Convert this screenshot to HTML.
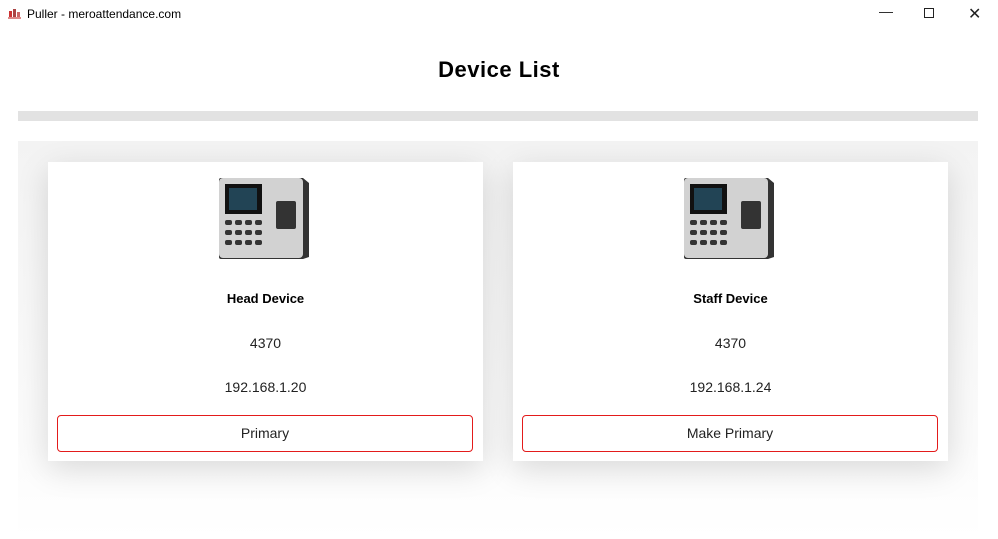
<!DOCTYPE html>
<html><head><meta charset="utf-8"><style>
*{margin:0;padding:0;box-sizing:border-box}
body{width:998px;height:539px;overflow:hidden;background:#fff;font-family:"Liberation Sans",sans-serif;position:relative;color:#111}
.tb{position:absolute;left:0;top:0;width:998px;height:28px}
.tb .t{position:absolute;left:27px;top:7px;font-size:12px;color:#000}
.ico{position:absolute;left:8px;top:7px;width:13px;height:12px}
.wc{position:absolute;top:6px;font-size:14px;color:#222}
h1{position:absolute;top:57px;left:0;width:998px;text-align:center;font-size:22px;font-weight:bold;letter-spacing:0.5px;color:#000}
.bar{position:absolute;left:18px;top:111px;width:960px;height:10px;background:#e2e2e2}
.wrap{position:absolute;left:18px;top:141px;width:960px;height:398px;background:linear-gradient(#f3f3f3,#fbfbfb 75%,#fff)}
.card{position:absolute;top:162px;width:435px;height:299px;background:#fff;box-shadow:0 8px 30px rgba(0,0,0,0.14)}
.name{position:absolute;top:129px;width:100%;text-align:center;font-weight:bold;font-size:13px;color:#000}
.num{position:absolute;top:173px;width:100%;text-align:center;font-size:14px;color:#222}
.ip{position:absolute;top:217px;width:100%;text-align:center;font-size:14px;color:#222}
.btn{position:absolute;left:9px;top:253px;width:416px;height:37px;border:1px solid #e31b1b;border-radius:4px;text-align:center;line-height:35px;font-size:14px;color:#222}
.dev{position:absolute;left:171px;top:13px;width:92px;height:84px}
</style></head><body>
<div class="tb">
<svg class="ico" viewBox="0 0 13 12"><rect x="1" y="4" width="3" height="6" fill="#c33"/><rect x="5" y="2" width="3" height="8" fill="#a44"/><rect x="9" y="5" width="3" height="5" fill="#c66"/><rect x="0" y="10" width="13" height="2" fill="#d88"/></svg>
<div class="t">Puller - meroattendance.com</div>
<div class="wc" style="left:879px;top:3px">&#8212;</div>
<div style="position:absolute;left:924px;top:8px;width:10px;height:10px;border:1px solid #222"></div>
<div class="wc" style="left:968px;top:4px;font-size:16px">&#10005;</div>
</div>
<h1>Device List</h1>
<div class="bar"></div>
<div class="wrap"></div>

<div class="card" style="left:48px">
<svg class="dev" viewBox="0 0 92 84"><path d="M2 3 H84 L90 8 V82 L84 84 H2 Q0 84 0 82 V5 Q0 3 2 3Z" fill="#333"/><rect x="0" y="3" width="84" height="80" rx="4" fill="#d2d2d2"/><rect x="6" y="9" width="37" height="30" fill="#111"/><rect x="10" y="13" width="28" height="22" fill="#245"/><rect x="57" y="26" width="20" height="28" rx="2" fill="#333"/><g fill="#333"><rect x="6" y="45" width="7" height="5" rx="2"/><rect x="16" y="45" width="7" height="5" rx="2"/><rect x="26" y="45" width="7" height="5" rx="2"/><rect x="36" y="45" width="7" height="5" rx="2"/><rect x="6" y="55" width="7" height="5" rx="2"/><rect x="16" y="55" width="7" height="5" rx="2"/><rect x="26" y="55" width="7" height="5" rx="2"/><rect x="36" y="55" width="7" height="5" rx="2"/><rect x="6" y="65" width="7" height="5" rx="2"/><rect x="16" y="65" width="7" height="5" rx="2"/><rect x="26" y="65" width="7" height="5" rx="2"/><rect x="36" y="65" width="7" height="5" rx="2"/></g></svg>
<div class="name">Head Device</div><div class="num">4370</div><div class="ip">192.168.1.20</div>
<div class="btn">Primary</div></div>

<div class="card" style="left:513px">
<svg class="dev" viewBox="0 0 92 84"><path d="M2 3 H84 L90 8 V82 L84 84 H2 Q0 84 0 82 V5 Q0 3 2 3Z" fill="#333"/><rect x="0" y="3" width="84" height="80" rx="4" fill="#d2d2d2"/><rect x="6" y="9" width="37" height="30" fill="#111"/><rect x="10" y="13" width="28" height="22" fill="#245"/><rect x="57" y="26" width="20" height="28" rx="2" fill="#333"/><g fill="#333"><rect x="6" y="45" width="7" height="5" rx="2"/><rect x="16" y="45" width="7" height="5" rx="2"/><rect x="26" y="45" width="7" height="5" rx="2"/><rect x="36" y="45" width="7" height="5" rx="2"/><rect x="6" y="55" width="7" height="5" rx="2"/><rect x="16" y="55" width="7" height="5" rx="2"/><rect x="26" y="55" width="7" height="5" rx="2"/><rect x="36" y="55" width="7" height="5" rx="2"/><rect x="6" y="65" width="7" height="5" rx="2"/><rect x="16" y="65" width="7" height="5" rx="2"/><rect x="26" y="65" width="7" height="5" rx="2"/><rect x="36" y="65" width="7" height="5" rx="2"/></g></svg>
<div class="name">Staff Device</div><div class="num">4370</div><div class="ip">192.168.1.24</div>
<div class="btn">Make Primary</div></div>
</body></html>
